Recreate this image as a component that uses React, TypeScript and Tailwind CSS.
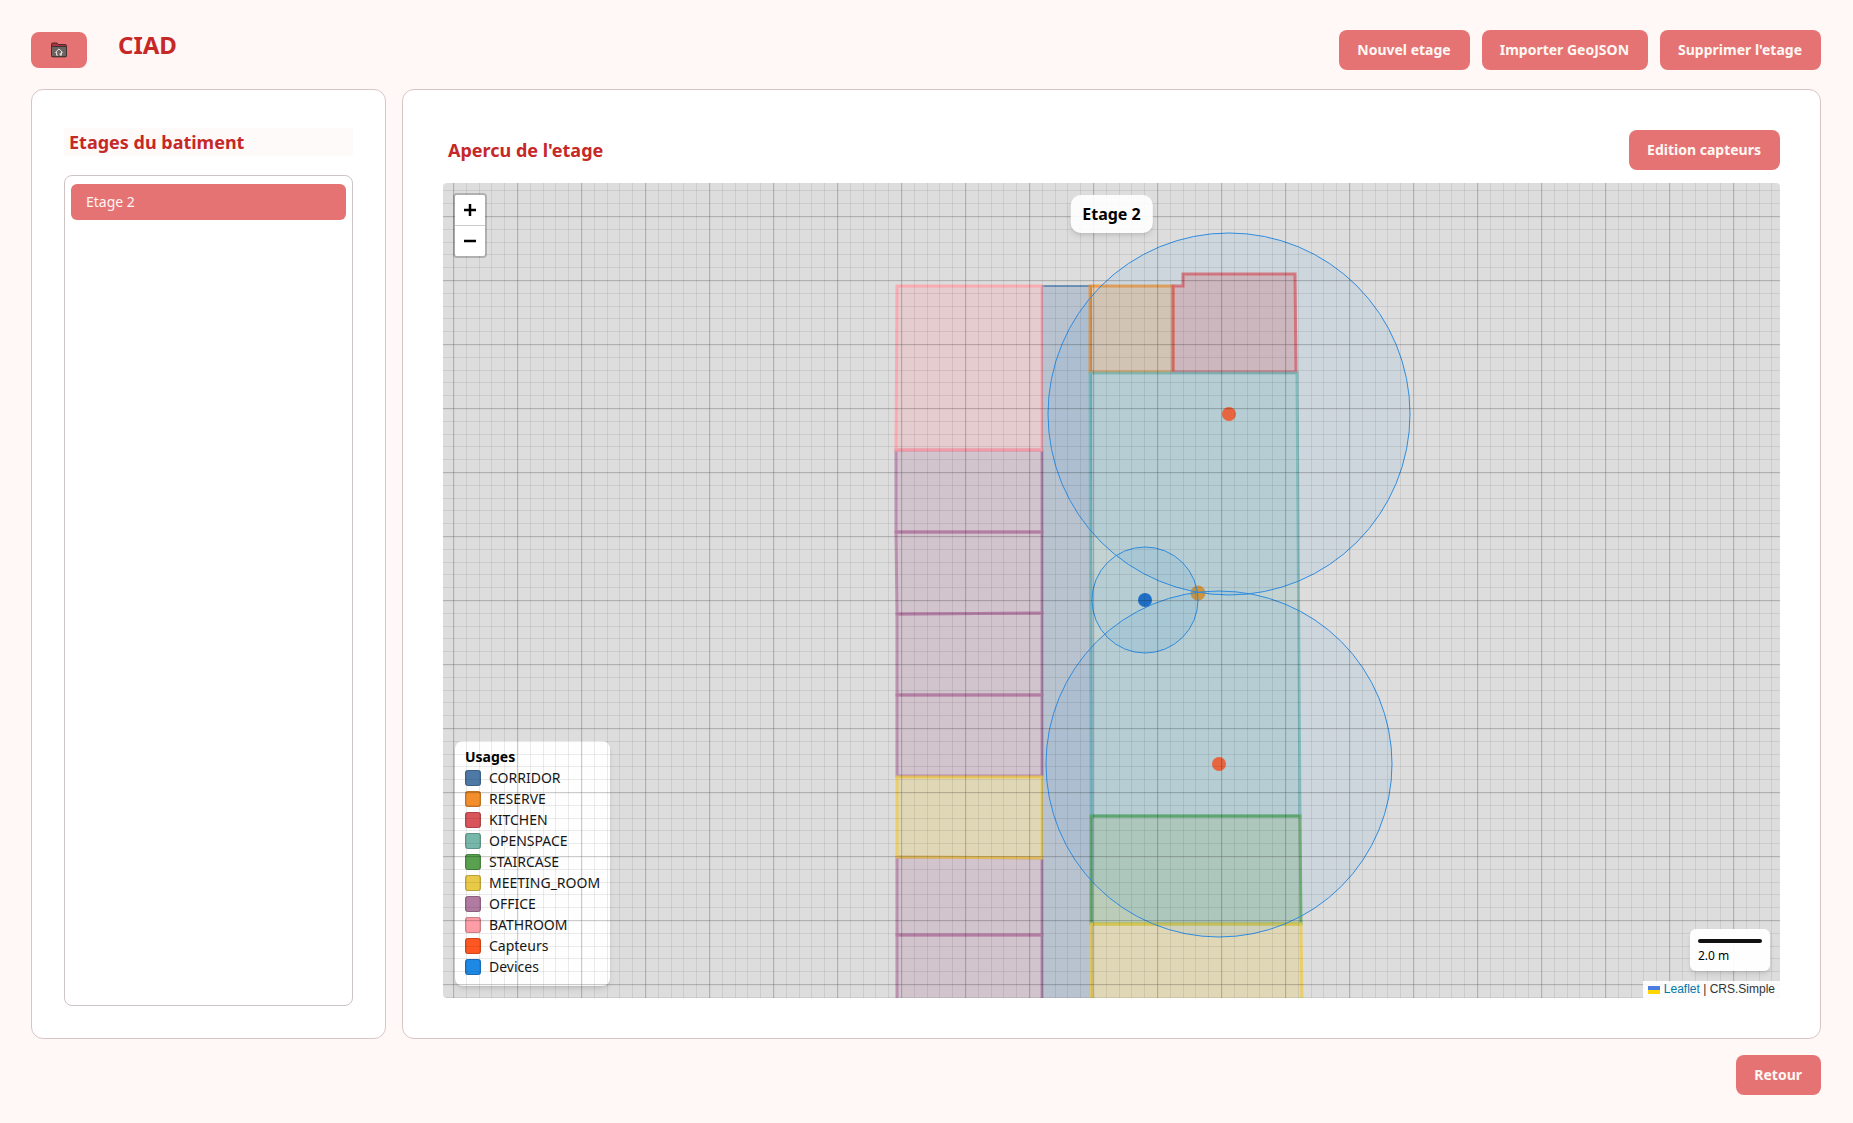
import { clsx } from "clsx";
import { useState } from "react";
import type { ReactNode } from "react";

type Room = {
  usage: string;
  points: string;
};

const usageColors: Record<string, string> = {
  CORRIDOR: "#4e79a7",
  RESERVE: "#f28e2b",
  KITCHEN: "#e15759",
  OPENSPACE: "#76b7b2",
  STAIRCASE: "#59a14f",
  MEETING_ROOM: "#edc948",
  OFFICE: "#b07aa1",
  BATHROOM: "#ff9da7",
};

const legend = [
  { label: "CORRIDOR", swatch: "bg-[#4e79a7]" },
  { label: "RESERVE", swatch: "bg-[#f28e2b]" },
  { label: "KITCHEN", swatch: "bg-[#d9555b]" },
  { label: "OPENSPACE", swatch: "bg-[#76b7a9]" },
  { label: "STAIRCASE", swatch: "bg-[#59a14f]" },
  { label: "MEETING_ROOM", swatch: "bg-[#e8c948]" },
  { label: "OFFICE", swatch: "bg-[#b07aa1]" },
  { label: "BATHROOM", swatch: "bg-[#ff9da7]" },
  { label: "Capteurs", swatch: "bg-[#ff5722]" },
  { label: "Devices", swatch: "bg-[#1e88e5]" },
];

const rooms: Room[] = [
  { usage: "CORRIDOR", points: "599,103 648,103 649,900 599,900" },
  { usage: "RESERVE", points: "647,103 730,103 730,189 647,189" },
  { usage: "KITCHEN", points: "730,103 740,103 740,91 852,91 853,189 730,189" },
  { usage: "OFFICE", points: "453,267 599,267 599,349 453,349" },
  { usage: "OFFICE", points: "453,349 599,349 599,430 454,431" },
  { usage: "OFFICE", points: "454,431 599,430 599,512 454,512" },
  { usage: "OFFICE", points: "454,512 599,512 599,593 454,593" },
  { usage: "OFFICE", points: "454,674 599,675 599,752 454,752" },
  { usage: "OFFICE", points: "454,752 599,752 599,900 454,900" },
  { usage: "BATHROOM", points: "454,103 599,103 599,267 453,267" },
  { usage: "OPENSPACE", points: "647,190 854,190 857,633 648,633" },
  { usage: "STAIRCASE", points: "648,633 857,633 858,741 648,741" },
  { usage: "MEETING_ROOM", points: "454,594 599,594 599,675 454,674" },
  { usage: "MEETING_ROOM", points: "648,741 858,741 860,900 649,900" },
];

const ranges = [
  { cx: 786, cy: 231, r: 181 },
  { cx: 776, cy: 581, r: 173 },
  { cx: 702, cy: 417, r: 53 },
];

const markers = [
  { cx: 786, cy: 231, r: 7, fill: "#e8663f" },
  { cx: 776, cy: 581, r: 7, fill: "#e8663f" },
  { cx: 702, cy: 417, r: 7, fill: "#1f6fc6" },
];

function ActionButton({ children }: { children: ReactNode }) {
  return (
    <button
      type="button"
      className="h-10 rounded-lg bg-[#e57373] pr-[19px] pl-[18px] text-sm font-bold text-[#fff8f4] hover:bg-[#d96464]"
    >
      {children}
    </button>
  );
}

function HomeFolderIcon() {
  return (
    <svg aria-hidden viewBox="0 0 16 16" className="h-4 w-4">
      <path
        d="M.5 13.500V2.200Q.5 1 1.700 1H6l1.400 1.500h6.900q1.200 0 1.200 1.200v9.800q0 1.200-1.200 1.200H1.700Q.5 14.700.5 13.500Z"
        fill="#a93440"
        stroke="#4a2a2e"
      />
      <path
        d="M.5 4.500h15v9q0 1.200-1.200 1.200H1.700Q.5 14.700.5 13.500Z"
        fill="#6b6462"
        stroke="#40302f"
      />
      <path
        d="M4.200 10.700 8 6.900l3.800 3.800M5.600 10v3.200h1.200M10.400 10v3.200H9.200V11"
        fill="none"
        stroke="#ece6e3"
      />
    </svg>
  );
}

function FloorPlan() {
  return (
    <svg
      role="img"
      aria-label="Plan de l'etage 2"
      viewBox="0 0 1337 815"
      preserveAspectRatio="xMidYMin slice"
      className="absolute inset-0 h-full w-full"
    >
      {rooms.map((room) => (
        <polygon
          key={room.points}
          points={room.points}
          fill={usageColors[room.usage]}
          fillOpacity={0.25}
          stroke={usageColors[room.usage]}
          strokeOpacity={0.75}
          strokeWidth={room.usage === "CORRIDOR" ? 2 : 3}
        />
      ))}
      <circle cx={755} cy={410} r={7.5} fill="#df9530" />
      {ranges.map((range) => (
        <circle
          key={range.cy}
          {...range}
          fill="#1e88e5"
          fillOpacity={0.08}
          stroke="#2f8ce0"
        />
      ))}
      {markers.map((marker) => (
        <circle key={marker.cy} {...marker} />
      ))}
    </svg>
  );
}

// 64px cells (2 m) split in five
function MetricGrid() {
  return (
    <svg aria-hidden className="pointer-events-none absolute inset-0 h-full w-full">
      <defs>
        <pattern id="grid" x="10" y="33" width="64" height="64" patternUnits="userSpaceOnUse">
          <path
            d="M13.500 0V64M26.500 0V64M38.500 0V64M51.500 0V64M0 13.500H64M0 26.500H64M0 38.500H64M0 51.500H64"
            stroke="#000"
            strokeOpacity="0.08"
          />
          <path d="M0.500 0V64M0 0.500H64" stroke="#000" strokeOpacity="0.2" />
          <path d="M1.500 1V64M1 1.500H64" stroke="#000" strokeOpacity="0.04" />
        </pattern>
      </defs>
      <rect width="100%" height="100%" fill="url(#grid)" />
    </svg>
  );
}

function Legend() {
  return (
    <div className="absolute bottom-3 left-3 rounded-lg bg-white/95 px-[10px] pt-[5px] pb-[9px] text-sm leading-[21px] text-neutral-900 shadow-md">
      <h3 className="font-bold text-black">Usages</h3>
      <ul>
        {legend.map((entry) => (
          <li key={entry.label} className="flex items-center gap-2">
            <span className={clsx("h-4 w-4 rounded-[3px] border border-black/20", entry.swatch)} />
            {entry.label}
          </li>
        ))}
      </ul>
    </div>
  );
}

function ZoomControl() {
  return (
    <div className="absolute top-[10px] left-[10px] flex flex-col overflow-hidden rounded-sm border-2 border-black/20 bg-clip-padding">
      <button
        type="button"
        aria-label="Zoom in"
        className="flex h-[31px] w-[30px] items-center justify-center border-b border-[#ccc] bg-white"
      >
        <svg aria-hidden viewBox="0 0 12 12" className="h-3 w-3">
          <path d="M6 0v12M0 6h12" stroke="#000" strokeWidth="2.500" />
        </svg>
      </button>
      <button
        type="button"
        aria-label="Zoom out"
        className="flex h-[30px] w-[30px] items-center justify-center bg-white"
      >
        <svg aria-hidden viewBox="0 0 12 12" className="h-3 w-3">
          <path d="M0 6h12" stroke="#000" strokeWidth="2.500" />
        </svg>
      </button>
    </div>
  );
}

function FloorMap() {
  return (
    <div className="relative mt-[13px] flex-1 overflow-hidden rounded-sm bg-[#ddd]">
      <FloorPlan />
      <Legend />
      <MetricGrid />
      <ZoomControl />
      <div className="absolute top-3 left-1/2 -translate-x-1/2 rounded-[10px] bg-white/90 px-3 py-[7px] text-base font-bold whitespace-nowrap text-black shadow-md">
        Etage 2
      </div>
      <div className="absolute right-[10px] bottom-[27px] rounded-md bg-white/95 px-2 pt-[10px] pb-[7px] text-xs text-black shadow-md">
        <div className="h-1 w-16 rounded-full bg-[#111]" />
        <p className="mt-[5px]">2.0 m</p>
      </div>
      <div className="absolute right-0 bottom-0 flex items-center bg-white/90 px-[5px] font-['Liberation_Sans',sans-serif] text-xs leading-[17px] text-[#333]">
        <a href="https://leafletjs.com" className="flex items-center gap-1 text-[#0078a8]">
          <svg aria-hidden viewBox="0 0 12 8" className="h-2 w-3">
            <path fill="#4c7be1" d="M0 0h12v4H0z" />
            <path fill="#ffd500" d="M0 4h12v4H0z" />
          </svg>
          Leaflet
        </a>
        <span className="whitespace-pre"> | CRS.Simple</span>
      </div>
    </div>
  );
}

export default function App() {
  const floors = ["Etage 2"];
  const [selected, setSelected] = useState(floors[0]);

  return (
    <div className="flex min-h-screen flex-col bg-[#fff8f7] pt-[30px] pr-8 pb-7 pl-[31px] font-['Noto_Sans',sans-serif]">
      <header className="flex items-center justify-between">
        <div className="flex items-center gap-[31px]">
          <button
            type="button"
            aria-label="Accueil"
            className="flex h-9 w-14 items-center justify-center rounded-lg bg-[#e57373] hover:bg-[#d96464]"
          >
            <HomeFolderIcon />
          </button>
          <h1 className="pb-[10px] text-2xl leading-[30px] font-bold text-[#c62828]">CIAD</h1>
        </div>
        <div className="flex gap-3">
          <ActionButton>Nouvel etage</ActionButton>
          <ActionButton>Importer GeoJSON</ActionButton>
          <ActionButton>Supprimer l'etage</ActionButton>
        </div>
      </header>

      <main className="mt-[19px] flex flex-1 gap-4">
        <aside className="flex w-[355px] shrink-0 flex-col rounded-xl border border-[#d8c6c6] bg-white px-8 pt-[38px] pb-8">
          <h2 className="bg-[#fffafa] px-[5px] py-[2px] text-lg leading-6 font-bold text-[#c62828]">
            Etages du batiment
          </h2>
          <ul className="mt-[19px] flex-1 rounded-lg border border-[#cfc4c4] px-[6px] py-2">
            {floors.map((floor) => (
              <li key={floor}>
                <button
                  type="button"
                  onClick={() => setSelected(floor)}
                  className={clsx(
                    "h-9 w-full rounded-md px-[15px] text-left text-sm",
                    selected === floor ? "bg-[#e57373] text-[#fff5f3]" : "text-neutral-800"
                  )}
                >
                  {floor}
                </button>
              </li>
            ))}
          </ul>
        </aside>

        <section className="flex min-w-0 flex-1 flex-col rounded-xl border border-[#d8c6c6] bg-white p-10">
          <div className="flex items-center justify-between">
            <h2 className="px-[5px] text-lg leading-6 font-bold text-[#c62828]">
              Apercu de l'etage
            </h2>
            <ActionButton>Edition capteurs</ActionButton>
          </div>
          <FloorMap />
        </section>
      </main>

      <footer className="mt-4 flex justify-end">
        <ActionButton>Retour</ActionButton>
      </footer>
    </div>
  );
}
